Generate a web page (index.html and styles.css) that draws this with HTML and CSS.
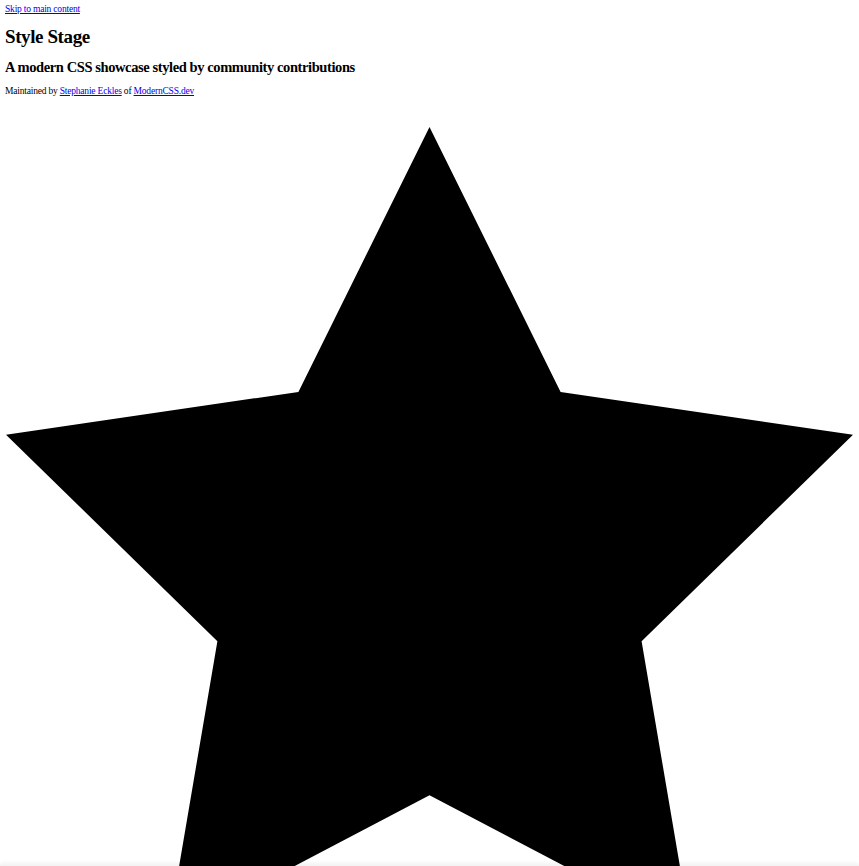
FILE: index.html
```html
<!DOCTYPE html>
<html lang="en">
<head>
<meta charset="utf-8">
<title>Style Stage</title>
<link rel="stylesheet" href="styles.css">
</head>
<body>
<a class="skip" href="#main">Skip to main content</a>
<header class="header">
  <h1 class="title">Style Stage</h1>
  <h2 class="subtitle">A modern CSS showcase styled by community contributions</h2>
  <p class="meta">Maintained by <a href="#">Stephanie Eckles</a> of <a href="#">ModernCSS.dev</a></p>
</header>
<svg class="star" viewBox="0 0 849 760" preserveAspectRatio="xMinYMin slice" aria-hidden="true">
  <polygon points="424.5,21 555.6,285.9 848,328.7 636.6,535.2 686.2,826.6 424.5,689.3 162.8,826.6 212.4,535.2 1,328.7 293.4,285.9" fill="#000"/>
</svg>
<div class="edge"></div>
</body>
</html>
```
FILE: styles.css
```css
html {
  overflow: hidden;
}
body {
  margin: 4.5px 5px 0;
  font-family: "Liberation Serif", "Times New Roman", serif;
  font-size: 9.5px;
  color: #000;
  background: #fff;
}
a {
  color: #0000ee;
}
.skip {
  display: block;
  width: max-content;
  font-size: 9.5px;
  line-height: 9.5px;
  letter-spacing: -0.2px;
}
.header {
  display: flex;
  flex-direction: column;
}
.title {
  margin: 12.8px 0 0;
  font-size: 19px;
  line-height: 19px;
  letter-spacing: -0.4px;
  font-weight: bold;
}
.subtitle {
  margin: 14.4px 0 0;
  font-size: 14.5px;
  line-height: 14.5px;
  letter-spacing: -0.4px;
  font-weight: bold;
}
.meta {
  margin: 12.8px 0 0;
  font-size: 9.5px;
  line-height: 9.5px;
  letter-spacing: -0.2px;
}
.star {
  display: block;
  width: 849px;
  height: 760px;
  margin-top: 9px;
}
.edge {
  position: fixed;
  left: 0;
  right: 0;
  bottom: 0;
  height: 6px;
  border-radius: 6px 6px 0 0;
  background: linear-gradient(to bottom, rgba(0,0,0,0), rgba(0,0,0,0.05));
  pointer-events: none;
}
```
